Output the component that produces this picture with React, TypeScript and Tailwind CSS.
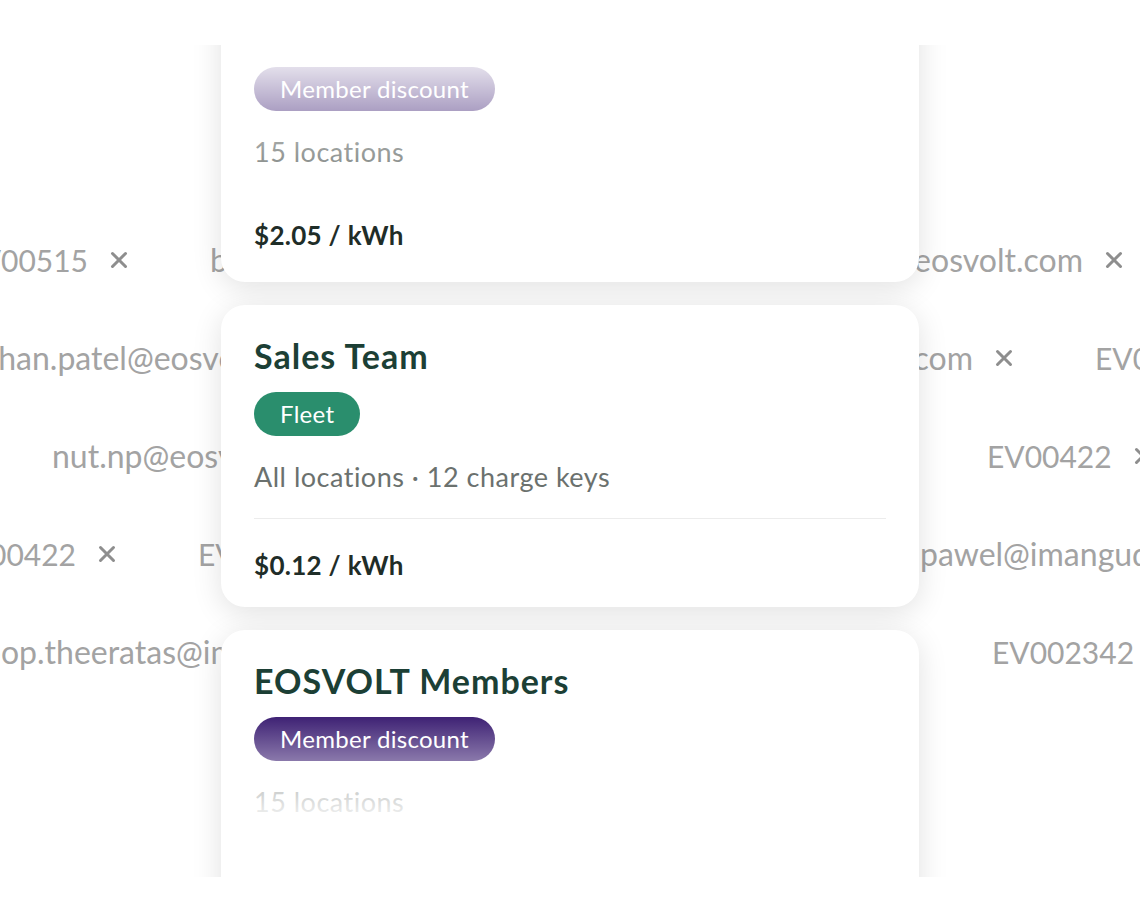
import React from 'react';

const XMark = () => (
	<svg width="18" height="18" viewBox="0 0 18 18" className="shrink-0">
		<path d="M2.5 2.5L15.5 15.5M15.5 2.5L2.5 15.5" stroke="#8e8e8e" strokeWidth="3" strokeLinecap="round" />
	</svg>
);

const Chip = ({ text, mail = false }: { text: string; mail?: boolean }) => (
	<div className="flex items-center gap-[22px] shrink-0">
		<span className={`whitespace-nowrap ${mail ? 'text-[32px]' : 'text-[30px]'}`}>{text}</span>
		<XMark />
	</div>
);

// shows the start of the text, rest hidden
const ClipStart = ({ text, w, shift = '', mail = true }: { text: string; w: string; shift?: string; mail?: boolean }) => (
	<div className={`${w} overflow-hidden shrink-0 flex`}>
		<span className={`whitespace-nowrap shrink-0 ${mail ? 'text-[32px]' : 'text-[30px]'} ${shift}`}>{text}</span>
	</div>
);

// shows the end of the text
const ClipEnd = ({ text, w }: { text: string; w: string }) => (
	<div className={`${w} overflow-hidden shrink-0 flex justify-end`}>
		<span className="whitespace-nowrap shrink-0 text-[32px]">{text}</span>
	</div>
);

function TagRow({ left, right, rightPad = '' }: { left: React.ReactNode; right: React.ReactNode; rightPad?: string }) {
	return (
		<div className="h-[98px] flex items-center">
			<div className="w-[260px] shrink-0 flex items-center justify-end gap-[82px]">{left}</div>
			<div className="w-[620px] shrink-0" />
			<div className={`w-[260px] shrink-0 flex items-center gap-[82px] ${rightPad}`}>{right}</div>
		</div>
	);
}

type Card = {
	title: string;
	badge: string;
	badgeClass: string;
	meta: string;
	price: string;
	divider?: boolean;
};

const cards: Card[] = [
	{ title: 'EOSVOLT Members', badge: 'Member discount', badgeClass: 'bg-[#3b1e72]', meta: '15 locations', price: '$2.05 / kWh' },
	{ title: 'Sales Team', badge: 'Fleet', badgeClass: 'bg-[#2a8e6d]', meta: 'All locations · 12 charge keys', price: '$0.12 / kWh', divider: true },
	{ title: 'EOSVOLT Members', badge: 'Member discount', badgeClass: 'bg-[#3b1e72]', meta: '15 locations', price: '$2.05 / kWh' },
];

function GroupCard({ card }: { card: Card }) {
	return (
		<div className="w-[698px] h-[302px] shrink-0 bg-white rounded-[24px] shadow-[0_6px_30px_rgba(0,0,0,0.12)] px-[33px] pt-[31px] flex flex-col items-start">
			<h3 className="text-[34px] leading-[40px] font-bold text-[#1c3f35] tracking-[1px]">{card.title}</h3>
			<span className={`mt-[16px] h-[44px] px-[26px] rounded-full flex items-center text-white text-[24px] tracking-[0.3px] ${card.badgeClass}`}>{card.badge}</span>
			<p className="mt-[25px] text-[27px] leading-[32px] tracking-[0.5px] text-[#6b716e]">{card.meta}</p>
			{card.divider && <div className="mt-[25px] h-px w-full bg-[#ececec]" />}
			<p className={`${card.divider ? 'mt-[30px]' : 'mt-[51px]'} text-[26px] leading-[32px] tracking-[0.3px] font-bold text-[#1f2d28]`}>{card.price}</p>
		</div>
	);
}

export default function App() {
	return (
		<div className="w-full h-[912px] bg-white overflow-hidden grid font-['Lato',sans-serif]">
			{/* tags in the background */}
			<div className="col-start-1 row-start-1 pt-[211px] flex flex-col text-[#a3a3a3]">
				<TagRow
					left={<><Chip text="EV00515" /><ClipStart text="brian@eosvolt.com" w="w-[50px]" /></>}
					right={<>
						<div className="flex items-center gap-[22px] shrink-0"><ClipEnd text="anna.k@eosvolt.com" w="w-[203px]" /><XMark /></div>
						<Chip text="EV00422" />
					</>}
				/>
				<TagRow
					left={<ClipStart text="ethan.patel@eosvolt.com" w="w-[260px]" shift="-ml-[30px]" />}
					right={<>
						<div className="flex items-center gap-[22px] shrink-0"><ClipEnd text="mike.r@eosvolt.com" w="w-[93px]" /><XMark /></div>
						<Chip text="EV00515" />
					</>}
				/>
				<TagRow
					left={<><Chip text="EV00231" /><ClipStart text="nut.np@eosvolt.com" w="w-[208px]" /></>}
					right={<><div className="w-[25px] shrink-0" /><Chip text="EV00422" /></>}
				/>
				<TagRow
					left={<><Chip text="EV00422" /><ClipStart text="EV00515" w="w-[62px]" mail={false} /></>}
					right={<Chip text="pawel@imangudo.com" mail />}
					rightPad="pl-[40px]"
				/>
				<TagRow
					left={<ClipStart text="pop.theeratas@imangudo.com" w="w-[260px]" shift="-ml-[17px]" />}
					right={<Chip text="EV002342" />}
					rightPad="pl-[112px]"
				/>
			</div>

			{/* scrolling card list */}
			<div className="col-start-1 row-start-1 mt-[45px] h-[832px] w-[778px] mx-auto px-[40px] overflow-hidden relative">
				<div className="-mt-[65px] flex flex-col gap-[23px]">
					{cards.map((c, i) => (
						<GroupCard key={i} card={c} />
					))}
				</div>
				<div className="absolute left-[40px] right-[40px] top-0 h-[155px] bg-gradient-to-b from-white to-transparent pointer-events-none" />
				<div className="absolute left-[40px] right-[40px] top-[670px] bottom-0 bg-gradient-to-b from-transparent via-white via-[70%] to-white pointer-events-none" />
			</div>
		</div>
	);
}
